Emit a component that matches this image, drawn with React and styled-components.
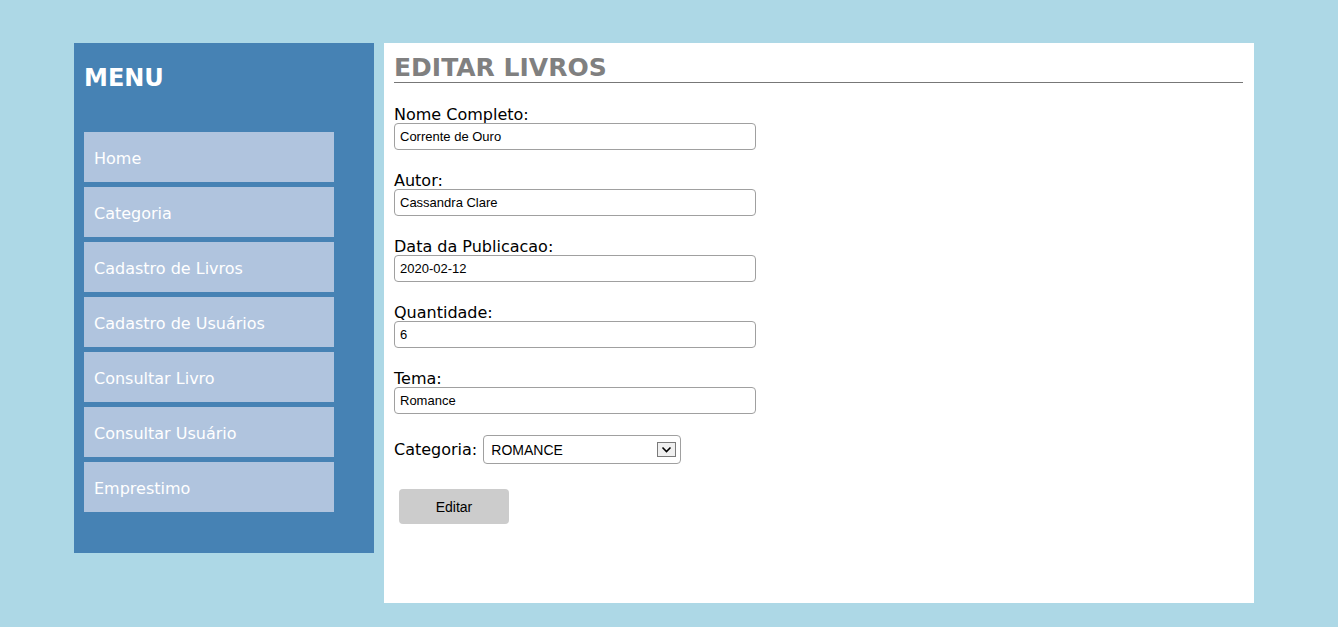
import React from "react";
import styled, { createGlobalStyle } from "styled-components";

const Global = createGlobalStyle`
  html, body { margin: 0; padding: 0; }
  body {
    background: #add8e6;
    font-family: "DejaVu Sans", Verdana, sans-serif;
    width: 1338px;
    min-height: 627px;
  }
`;

const Page = styled.div`
  display: flex;
  align-items: flex-start;
  gap: 10px;
  padding: 43px 0 24px 74px;
`;

const Sidebar = styled.nav`
  width: 300px;
  height: 510px;
  box-sizing: border-box;
  background: #4682b4;
  padding: 21px 10px 20px;
`;

const MenuTitle = styled.h1`
  margin: 0;
  color: #fff;
  font-size: 24px;
  font-weight: bold;
  line-height: 28px;
  height: 28px;
`;

const MenuList = styled.ul`
  list-style: none;
  margin: 40px 0 0;
  padding: 0;
  display: flex;
  flex-direction: column;
  gap: 5px;
`;

const MenuItem = styled.li`
  width: 250px;
  height: 50px;
  box-sizing: border-box;
  background: #b0c4de;
  color: #fff;
  font-size: 16px;
  padding: 2px 10px 0;
  display: flex;
  align-items: center;
`;

const Main = styled.main`
  width: 870px;
  height: 560px;
  box-sizing: border-box;
  background: #fff;
  padding: 10px 11px 10px 10px;
`;

const Title = styled.h2`
  margin: 0 0 23px;
  color: #808080;
  font-size: 25px;
  font-weight: bold;
  line-height: 29px;
  border-bottom: 1px solid #777;
`;

const Field = styled.div`
  display: flex;
  flex-direction: column;
  margin-bottom: 22px;
`;

const Label = styled.label`
  color: #000;
  font-size: 16px;
  line-height: 17px;
  height: 17px;
`;

const Input = styled.input`
  width: 362px;
  height: 27px;
  box-sizing: border-box;
  border: 1px solid #a0a0a0;
  border-radius: 4px;
  padding: 0 5px;
  font-family: "Liberation Sans", Arial, sans-serif;
  font-size: 13px;
  color: #000;
  outline: none;
`;

const InlineRow = styled.div`
  display: flex;
  align-items: center;
  gap: 6px;
  height: 29px;
  margin-top: -1px;
`;

const SelectWrap = styled.div`
  position: relative;
  width: 198px;
  height: 29px;
`;

const Select = styled.select`
  appearance: none;
  -webkit-appearance: none;
  width: 100%;
  height: 100%;
  box-sizing: border-box;
  border: 1px solid #a0a0a0;
  border-radius: 4px;
  background: #fff;
  padding: 0 7px;
  font-family: "Liberation Sans", Arial, sans-serif;
  font-size: 14px;
  color: #000;
  outline: none;
`;

const Arrow = styled.span`
  position: absolute;
  right: 5px;
  top: 7px;
  width: 19px;
  height: 15px;
  box-sizing: border-box;
  border: 1px solid #7a7a7a;
  background: #f0f0f0;
  display: flex;
  align-items: center;
  justify-content: center;
  pointer-events: none;
`;

const Button = styled.button`
  margin: 25px 0 0 5px;
  width: 110px;
  height: 35px;
  border: none;
  border-radius: 4px;
  background: #cccccc;
  font-family: "Liberation Sans", Arial, sans-serif;
  font-size: 14px;
  color: #000;
`;

const menu = [
  "Home",
  "Categoria",
  "Cadastro de Livros",
  "Cadastro de Usuários",
  "Consultar Livro",
  "Consultar Usuário",
  "Emprestimo",
];

const fields = [
  ["Nome Completo:", "Corrente de Ouro"],
  ["Autor:", "Cassandra Clare"],
  ["Data da Publicacao:", "2020-02-12"],
  ["Quantidade:", "6"],
  ["Tema:", "Romance"],
];

export default function App() {
  return (
    <>
      <Global />
      <Page>
        <Sidebar>
          <MenuTitle>MENU</MenuTitle>
          <MenuList>
            {menu.map((m) => (
              <MenuItem key={m}>{m}</MenuItem>
            ))}
          </MenuList>
        </Sidebar>
        <Main>
          <Title>EDITAR LIVROS</Title>
          {fields.map(([l, v]) => (
            <Field key={l}>
              <Label>{l}</Label>
              <Input defaultValue={v} />
            </Field>
          ))}
          <InlineRow>
            <Label>Categoria:</Label>
            <SelectWrap>
              <Select defaultValue="ROMANCE">
                <option>ROMANCE</option>
              </Select>
              <Arrow>
                <svg width="11" height="7" viewBox="0 0 11 7">
                  <path d="M1.5 1.5 L5.5 5.5 L9.5 1.5" fill="none" stroke="#000" strokeWidth="1.6" />
                </svg>
              </Arrow>
            </SelectWrap>
          </InlineRow>
          <Button>Editar</Button>
        </Main>
      </Page>
    </>
  );
}
